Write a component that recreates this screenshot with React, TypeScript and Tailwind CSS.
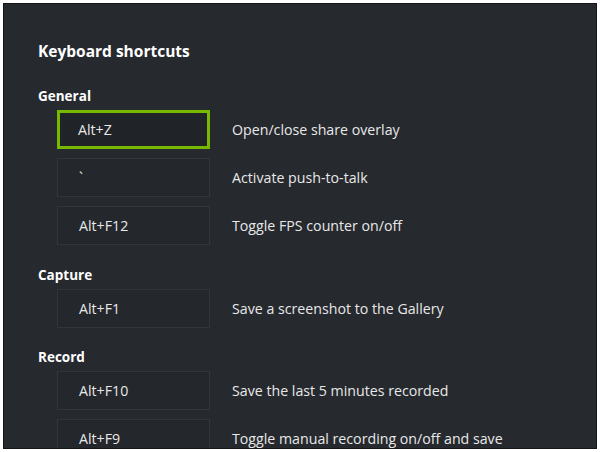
const sections = [
  {
    title: "General",
    gap: "mt-[24px]",
    items: [
      { key: "Alt+Z", label: "Open/close share overlay", active: true },
      { key: "`", label: "Activate push-to-talk" },
      { key: "Alt+F12", label: "Toggle FPS counter on/off" },
    ],
  },
  {
    title: "Capture",
    gap: "mt-[20px]",
    items: [{ key: "Alt+F1", label: "Save a screenshot to the Gallery" }],
  },
  {
    title: "Record",
    gap: "mt-[19px]",
    items: [
      { key: "Alt+F10", label: "Save the last 5 minutes recorded" },
      { key: "Alt+F9", label: "Toggle manual recording on/off and save" },
    ],
  },
];

function Row({ k, label, active }: { k: string; label: string; active?: boolean }) {
  return (
    <div className="flex items-center h-[39px]">
      <div
        className={
          active
            ? "ml-[19px] w-[153px] h-[39px] flex items-center pl-[18px] border-[3px] border-[#76b900] bg-[#202328]"
            : "ml-[19px] w-[153px] h-[39px] flex items-center pl-[21px] border border-[#32353a] bg-[#24272c]"
        }
      >
        {k}
      </div>
      <div className="ml-[22px]">{label}</div>
    </div>
  );
}

export default function App() {
  return (
    <div className="w-[600px] h-[452px] bg-white p-[3px] overflow-hidden">
      <div
        className="w-[594px] h-[446px] bg-[#26292e] border border-[#121417] text-[#e8e8e8] text-[14.2px] overflow-hidden pl-[34px] pt-[36px]"
        style={{ fontFamily: '"Open Sans", "Noto Sans", sans-serif' }}
      >
        <div className="text-[15.5px] font-bold text-white leading-[22px]">Keyboard shortcuts</div>
        {sections.map((s) => (
          <div key={s.title} className={s.gap}>
            <div className="text-[13.5px] font-bold text-white leading-[20px]">{s.title}</div>
            <div className="mt-[4px] flex flex-col gap-[9px]">
              {s.items.map((it) => (
                <Row key={it.key} k={it.key} label={it.label} active={"active" in it && it.active} />
              ))}
            </div>
          </div>
        ))}
      </div>
    </div>
  );
}
